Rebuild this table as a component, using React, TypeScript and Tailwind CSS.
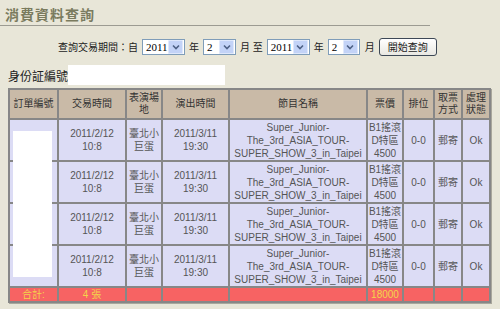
import React from 'react';

type Row = { date: string; time: string; venue: string[]; show: string[]; price: string[]; seat: string; pickup: string; status: string };

const show = ['Super_Junior-', 'The_3rd_ASIA_TOUR-', 'SUPER_SHOW_3_in_Taipei'];

const rows: Row[] = Array.from({ length: 4 }, () => ({
  date: '2011/2/12',
  time: '10:8',
  venue: ['臺北小', '巨蛋'],
  show,
  price: ['B1搖滾', 'D特區', '4500'],
  seat: '0-0',
  pickup: '郵寄',
  status: 'Ok',
}));

function Select({ value, width }: { value: string; width: string }) {
  return (
    <div className={`flex h-[16px] items-center border border-[#7f9db9] bg-white ${width}`}>
      <span className="flex-1 pl-[3px] font-['Liberation_Serif',serif] text-[11px] leading-none text-black">{value}</span>
      <span className="mr-px flex h-[14px] w-[15px] items-center justify-center rounded-[1px] border border-[#dfe8fb] bg-[#c3d3f7]">
        <svg width="8" height="6" viewBox="0 0 8 6">
          <path d="M1 1.5 L4 4.5 L7 1.5" fill="none" stroke="#4d6185" strokeWidth="1.6" />
        </svg>
      </span>
    </div>
  );
}

const cellHead = 'bg-[#c9baa7] text-center align-middle text-[#333] leading-[12px]';
const cellData = 'bg-[#dcdcf5] text-center align-middle text-[#555] leading-[13px]';
const cellTotal = 'bg-[#f76363] text-center align-middle text-[#f3d54a] leading-[13px]';

export default function App() {
  return (
    <div className="h-[309px] w-[500px] overflow-hidden bg-[#e8e6d8] font-['Liberation_Sans','Noto_Sans_CJK_TC',sans-serif] text-[10px]">
      <div className="pl-[5px] pt-[6px] font-['Noto_Sans_CJK_TC',sans-serif] text-[14px] font-bold leading-[17px] tracking-[1px] text-[#7a7b5e]">
        消費資料查詢
      </div>
      <div className="mt-[2px] h-px w-[430px] bg-[#9c9b92]" />

      <div className="mt-[12px] flex h-[18px] items-center pl-[58px] text-[10px] text-[#222]">
        <span>查詢交易期間：自</span>
        <span className="ml-[4px]"><Select value="2011" width="w-[43px]" /></span>
        <span className="mx-[4px]">年</span>
        <Select value="2" width="w-[33px]" />
        <span className="ml-[4px]">月 至</span>
        <span className="ml-[4px]"><Select value="2011" width="w-[43px]" /></span>
        <span className="mx-[4px]">年</span>
        <Select value="2" width="w-[32px]" />
        <span className="ml-[5px]">月</span>
        <button className="ml-[4px] h-[18px] w-[58px] rounded-[3px] border border-[#3d4856] bg-gradient-to-b from-white to-[#e9e8e2] text-[10px] text-[#222]">
          開始查詢
        </button>
      </div>

      <div className="mt-[9px] flex h-[20px] items-end pl-[8px]">
        <span className="pb-[1px] text-[12px] leading-[14px] text-[#222]">身份証編號</span>
        <span className="h-[20px] w-[157px] bg-white" />
      </div>

      <div className="relative ml-[8px] mt-[3px] w-[483px]">
        <table className="w-[483px] table-fixed border-separate border-spacing-[2px] bg-[#878787] shadow-[1px_1px_0_#a9a79c]">
          <colgroup>
            <col className="w-[47px]" />
            <col className="w-[66px]" />
            <col className="w-[34px]" />
            <col className="w-[65px]" />
            <col className="w-[136px]" />
            <col className="w-[34px]" />
            <col className="w-[29px]" />
            <col className="w-[26px]" />
            <col className="w-[26px]" />
          </colgroup>
          <thead>
            <tr className="h-[28px]">
              <th className={`${cellHead} font-normal`}>訂單編號</th>
              <th className={`${cellHead} font-normal`}>交易時間</th>
              <th className={`${cellHead} font-normal`}>表演場<br />地</th>
              <th className={`${cellHead} font-normal`}>演出時間</th>
              <th className={`${cellHead} font-normal`}>節目名稱</th>
              <th className={`${cellHead} font-normal`}>票價</th>
              <th className={`${cellHead} font-normal`}>排位</th>
              <th className={`${cellHead} font-normal`}>取票<br />方式</th>
              <th className={`${cellHead} font-normal`}>處理<br />狀態</th>
            </tr>
          </thead>
          <tbody>
            {rows.map((r, i) => (
              <tr key={i} className="h-[40px]">
                <td className={cellData}></td>
                <td className={cellData}>{r.date}<br />{r.time}</td>
                <td className={cellData}>{r.venue[0]}<br />{r.venue[1]}</td>
                <td className={cellData}>2011/3/11<br />19:30</td>
                <td className={cellData}>{r.show.map((s, j) => (<React.Fragment key={j}>{s}{j < r.show.length - 1 && <br />}</React.Fragment>))}</td>
                <td className={cellData}>{r.price[0]}<br />{r.price[1]}<br />{r.price[2]}</td>
                <td className={cellData}>{r.seat}</td>
                <td className={cellData}>{r.pickup}</td>
                <td className={cellData}>{r.status}</td>
              </tr>
            ))}
            <tr className="h-[13px]">
              <td className={cellTotal}>合計:</td>
              <td className={cellTotal}>4 張</td>
              <td className={cellTotal}></td>
              <td className={cellTotal}></td>
              <td className={cellTotal}></td>
              <td className={cellTotal}>18000</td>
              <td className={cellTotal}></td>
              <td className={cellTotal}></td>
              <td className={cellTotal}></td>
            </tr>
          </tbody>
        </table>
        {/* redaction block over order numbers */}
        <div className="absolute left-[5px] top-[43px] h-[146px] w-[39px] bg-white" />
      </div>
    </div>
  );
}
